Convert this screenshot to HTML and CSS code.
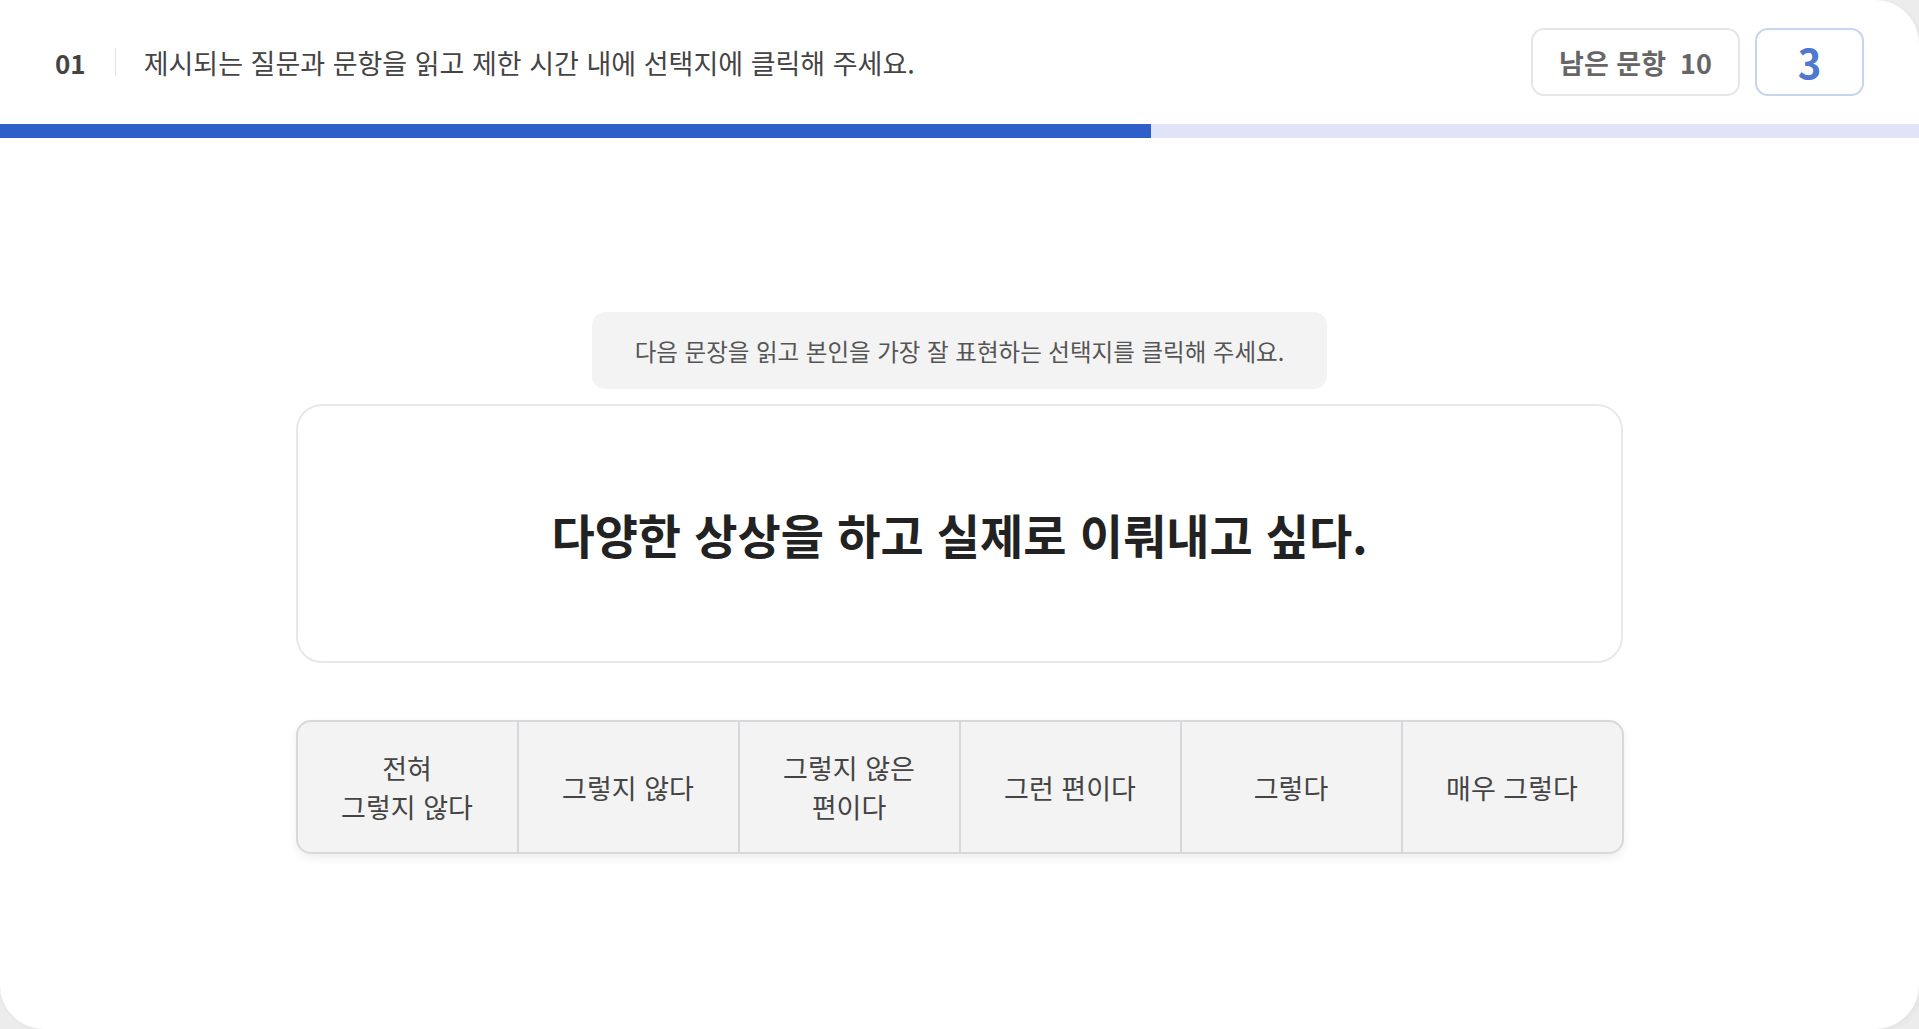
FILE: index.html
```html
<!DOCTYPE html>
<html lang="ko">
<head>
    <meta charset="UTF-8">
    <meta name="viewport" content="width=device-width, initial-scale=1.0">
    <title>인성 검사</title>
    <link rel="stylesheet" href="styles.css">
</head>
<body>

    <div class="page">
        <div class="top-bar">
            <div class="step">01</div>
            <div class="divider"></div>
            <p class="guide">제시되는 질문과 문항을 읽고 제한 시간 내에 선택지에 클릭해 주세요.</p>
            <div class="status">
                <div class="remain">남은 문항 <span class="remain-count">10</span></div>
                <div class="timer">3</div>
            </div>
        </div>

        <div class="progress">
            <div class="progress-fill" style="width: 60%"></div>
        </div>

        <div class="test-area">
            <div class="notice">다음 문장을 읽고 본인을 가장 잘 표현하는 선택지를 클릭해 주세요.</div>

            <div class="question">
                <h2>다양한 상상을 하고 실제로 이뤄내고 싶다.</h2>
            </div>

            <div class="answers">
                <button class="answer">전혀<br>그렇지 않다</button>
                <button class="answer">그렇지 않다</button>
                <button class="answer">그렇지 않은<br>편이다</button>
                <button class="answer">그런 편이다</button>
                <button class="answer">그렇다</button>
                <button class="answer">매우 그렇다</button>
            </div>
        </div>
    </div>

</body>
</html>
```

FILE: styles.css
```css
* {
    box-sizing: border-box;
}
html, body {
    height: 100%;
}
body {
    margin: 0;
    font-family: "Noto Sans CJK KR", "Noto Sans", sans-serif;
    background-color: #ececec;
    overflow: hidden;
}
.page {
    height: 100%;
    background-color: #fff;
    border-radius: 0 44px 44px 44px;
    box-shadow: 2px 2px 6px rgba(0, 0, 0, 0.04);
}
.top-bar {
    height: 124px;
    padding: 0 55px;
    display: flex;
    align-items: center;
}
.step {
    font-size: 26px;
    font-weight: 700;
    color: #444;
}
.divider {
    width: 1px;
    height: 28px;
    background-color: #e3e3e3;
    margin: 0 28px 0 29px;
}
.guide {
    margin: 0;
    font-size: 27px;
    color: #444;
}
.status {
    margin-left: auto;
    display: flex;
    gap: 15px;
}
.remain {
    width: 209px;
    height: 68px;
    border: 2px solid #e6e6e6;
    border-radius: 13px;
    display: flex;
    align-items: center;
    justify-content: center;
    font-size: 27px;
    font-weight: 700;
    color: #666;
}
.remain-count {
    margin-left: 14px;
}
.timer {
    width: 109px;
    height: 68px;
    border: 2px solid #c6d4f2;
    border-radius: 13px;
    display: flex;
    align-items: center;
    justify-content: center;
    font-size: 40px;
    font-weight: 700;
    color: #4f78d0;
}
.progress {
    height: 14px;
    background-color: #dfe4f8;
}
.progress-fill {
    height: 100%;
    background-color: #2f5fc8;
}
.test-area {
    display: flex;
    flex-direction: column;
    align-items: center;
    padding-top: 174px;
}
.notice {
    width: 735px;
    height: 77px;
    background-color: #f3f3f3;
    border-radius: 13px;
    display: flex;
    align-items: center;
    justify-content: center;
    font-size: 23.5px;
    color: #555;
}
.question {
    width: 1327px;
    height: 259px;
    margin-top: 15px;
    border: 2px solid #e8e8e8;
    border-radius: 26px;
    display: flex;
    align-items: center;
    justify-content: center;
}
.question h2 {
    margin: 0;
    font-size: 47px;
    font-weight: 700;
    color: #222;
}
.answers {
    width: 1328px;
    height: 134px;
    margin-top: 57px;
    display: flex;
    background-color: #f3f3f3;
    border: 2px solid #d8d8dc;
    border-radius: 15px;
    box-shadow: 0 4px 10px rgba(0, 0, 0, 0.07);
    overflow: hidden;
}
.answer {
    flex: 1;
    border: none;
    border-left: 2px solid #d8d8dc;
    background: none;
    font-family: inherit;
    font-size: 27px;
    line-height: 39px;
    color: #444;
    cursor: pointer;
}
.answer:first-child {
    border-left: none;
}
.answer:hover {
    background-color: #eaeaea;
}
```
